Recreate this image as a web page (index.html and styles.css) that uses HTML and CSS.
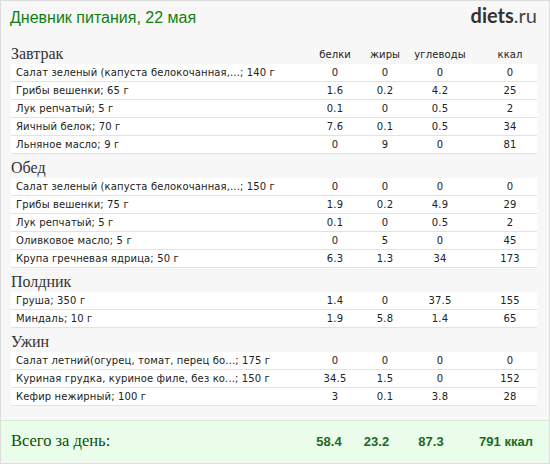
FILE: index.html
```html
<!DOCTYPE html>
<html lang="ru">
<head>
    <meta charset="UTF-8">
    <title>Дневник питания</title>
    <link rel="stylesheet" href="styles.css">
</head>
<body>
    <div id="diary">
        <div class="top">
            <div class="title">Дневник питания, 22 мая</div>
            <div class="logo"><b>diets</b>.ru</div>
        </div>

        <div class="meal">
            <div class="meal-head">
                <span class="meal-name">Завтрак</span>
                <span class="lbl">белки</span><span class="lbl">жиры</span><span class="lbl">углеводы</span><span class="lbl kc">ккал</span>
            </div>
            <div class="row"><span class="nm">Салат зеленый (капуста белокочанная,...; 140 г</span><span>0</span><span>0</span><span>0</span><span class="kc">0</span></div>
            <div class="row"><span class="nm">Грибы вешенки; 65 г</span><span>1.6</span><span>0.2</span><span>4.2</span><span class="kc">25</span></div>
            <div class="row"><span class="nm">Лук репчатый; 5 г</span><span>0.1</span><span>0</span><span>0.5</span><span class="kc">2</span></div>
            <div class="row"><span class="nm">Яичный белок; 70 г</span><span>7.6</span><span>0.1</span><span>0.5</span><span class="kc">34</span></div>
            <div class="row"><span class="nm">Льняное масло; 9 г</span><span>0</span><span>9</span><span>0</span><span class="kc">81</span></div>
        </div>

        <div class="meal">
            <div class="meal-head"><span class="meal-name">Обед</span></div>
            <div class="row"><span class="nm">Салат зеленый (капуста белокочанная,...; 150 г</span><span>0</span><span>0</span><span>0</span><span class="kc">0</span></div>
            <div class="row"><span class="nm">Грибы вешенки; 75 г</span><span>1.9</span><span>0.2</span><span>4.9</span><span class="kc">29</span></div>
            <div class="row"><span class="nm">Лук репчатый; 5 г</span><span>0.1</span><span>0</span><span>0.5</span><span class="kc">2</span></div>
            <div class="row"><span class="nm">Оливковое масло; 5 г</span><span>0</span><span>5</span><span>0</span><span class="kc">45</span></div>
            <div class="row"><span class="nm">Крупа гречневая ядрица; 50 г</span><span>6.3</span><span>1.3</span><span>34</span><span class="kc">173</span></div>
        </div>

        <div class="meal">
            <div class="meal-head"><span class="meal-name">Полдник</span></div>
            <div class="row"><span class="nm">Груша; 350 г</span><span>1.4</span><span>0</span><span>37.5</span><span class="kc">155</span></div>
            <div class="row"><span class="nm">Миндаль; 10 г</span><span>1.9</span><span>5.8</span><span>1.4</span><span class="kc">65</span></div>
        </div>

        <div class="meal">
            <div class="meal-head"><span class="meal-name">Ужин</span></div>
            <div class="row"><span class="nm">Салат летний(огурец, томат, перец бо...; 175 г</span><span>0</span><span>0</span><span>0</span><span class="kc">0</span></div>
            <div class="row"><span class="nm">Куриная грудка, куриное филе, без ко...; 150 г</span><span>34.5</span><span>1.5</span><span>0</span><span class="kc">152</span></div>
            <div class="row"><span class="nm">Кефир нежирный; 100 г</span><span>3</span><span>0.1</span><span>3.8</span><span class="kc">28</span></div>
        </div>

        <div class="total">
            <span class="total-name">Всего за день:</span>
            <span>58.4</span><span>23.2</span><span>87.3</span><span>791 ккал</span>
        </div>
    </div>
</body>
</html>
```

FILE: styles.css
```css
body{
    margin: 0;
}
#diary{
    box-sizing: border-box;
    width: 550px;
    height: 464px;
    border: 1px solid #dcdcdc;
    background-color: #f7f7f7;
    font-family: "DejaVu Sans", Verdana, sans-serif;
    color: #222;
}
.top{
    display: flex;
    justify-content: space-between;
    align-items: baseline;
    padding: 2px 12px 0 9px;
    height: 37px;
}
.title{
    font-family: "Liberation Sans", Arial, sans-serif;
    font-size: 16px;
    color: #118011;
}
.logo{
    font-family: Lato, "Open Sans", sans-serif;
    font-size: 20px;
    color: #444;
}
.logo b{
    color: #333;
}
.meal{
    padding: 0 12px 0 10px;
}
.meal-head,.row{
    display: grid;
    grid-template-columns: 1fr 50px 50px 60px 67px;
    text-align: center;
}
.meal-head{
    height: 24px;
    align-items: end;
}
.meal-name{
    text-align: left;
    font-family: "Liberation Serif", serif;
    font-size: 16px;
    line-height: 20px;
    color: #333;
}
.lbl{
    font-size: 10px;
    line-height: 18px;
    letter-spacing: 0.1px;
}
.row{
    background-color: #fff;
    border-bottom: 1px solid #e2e2e2;
    height: 17px;
    line-height: 17px;
    font-size: 10px;
    letter-spacing: 0.13px;
}
.nm{
    text-align: left;
    padding-left: 5px;
    white-space: nowrap;
    overflow: hidden;
}
.kc{
    padding-left: 13px;
}
.total{
    display: grid;
    grid-template-columns: 1fr 50px 45px 64px 86px;
    align-items: center;
    margin-top: 14px;
    height: 40px;
    background-color: #eafdea;
    border-top: 1px solid #d6e9d6;
    text-align: center;
    font-family: "Liberation Sans", Arial, sans-serif;
    font-weight: bold;
    font-size: 13px;
    color: #1d6a1d;
}
.total-name{
    text-align: left;
    padding-left: 10px;
    font-family: "Liberation Serif", serif;
    font-weight: normal;
    font-size: 16.5px;
    color: #0b4f0b;
}
```
